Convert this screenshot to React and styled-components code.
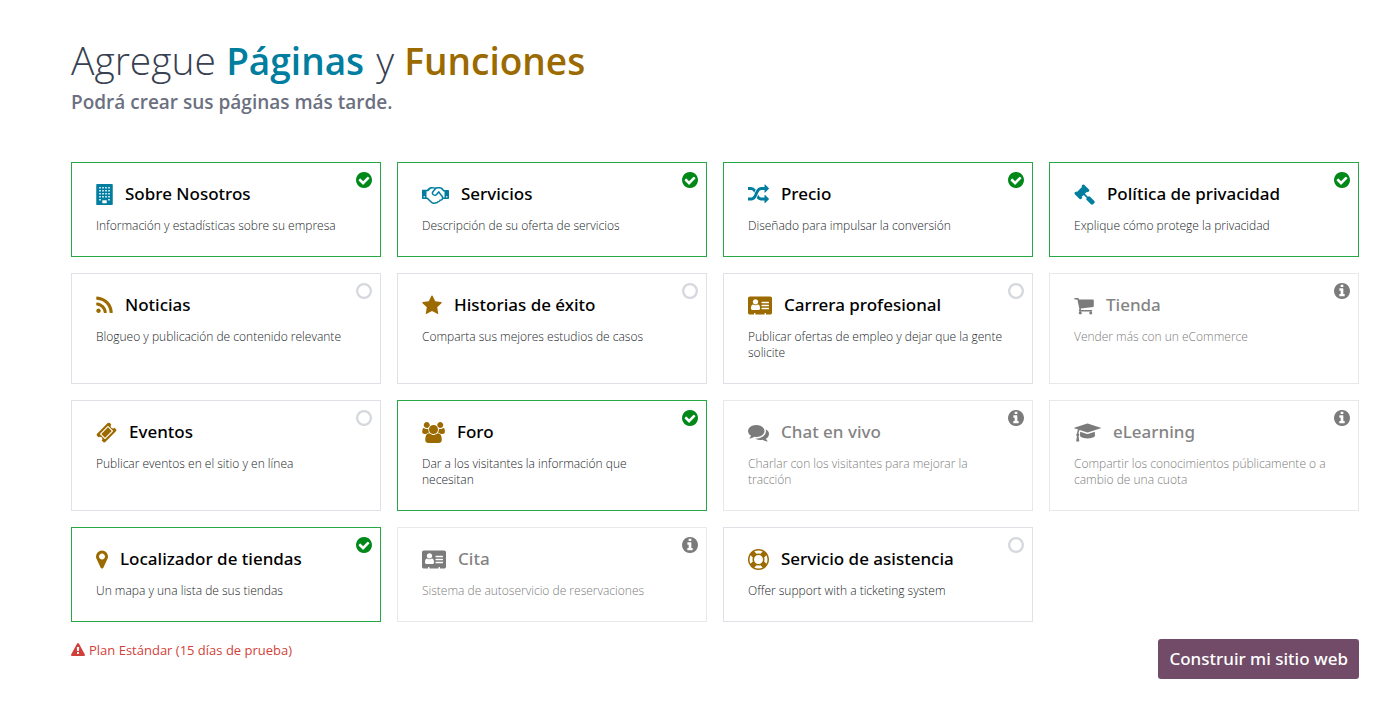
import React, { useState } from "react";
import styled, { createGlobalStyle } from "styled-components";

const GlobalStyle = createGlobalStyle`
  *, *::before, *::after { box-sizing: border-box; }
  body {
    margin: 0;
    background: #fff;
    color: #374151;
    font-family: "Open Sans", "Noto Sans", sans-serif;
    font-size: 13px;
  }
  h1, h2, h3, p { margin: 0; }
`;

const MEDIUM_FONT = `"Noto Sans", "Open Sans", sans-serif`;

const Page = styled.main`
  padding: 35px 30px 36px 71px;
`;

const Title = styled.h1`
  font-size: 39px;
  line-height: 50px;
  font-weight: 300;
`;

const Accent = styled.span`
  margin-right: 2px;
  color: ${(p) => p.$color};
  font-size: 37px;
  line-height: 1;
  font-weight: 600;
`;

const Subtitle = styled.h2`
  margin-bottom: 44px;
  padding-top: 1px;
  color: #6c7080;
  font-size: 19px;
  line-height: 32px;
  font-weight: 600;
`;

const Grid = styled.div`
  display: grid;
  grid-template-columns: repeat(4, 1fr);
  gap: 16px;
`;

const Card = styled.label`
  position: relative;
  display: block;
  padding: 19px 28px 22px 24px;
  border: 1px solid ${(p) => (p.$on ? "#28a745" : "#dee2e6")};
  opacity: ${(p) => (p.$locked ? 0.75 : 1)};
  cursor: ${(p) => (p.$locked ? "default" : "pointer")};
`;

const CardHead = styled.div`
  display: flex;
  align-items: center;
  gap: 12px;
  height: 24px;
  margin-bottom: 12px;
`;

const CardIcon = styled.svg`
  flex: none;
  height: 21px;
  fill: ${(p) => p.$color};
`;

const CardTitle = styled.h3`
  color: ${(p) => (p.$locked ? "#5a5a5a" : "#000")};
  font-family: ${MEDIUM_FONT};
  font-size: 17px;
  line-height: 24px;
  font-weight: 500;
  white-space: nowrap;
`;

const CardText = styled.p`
  color: ${(p) => (p.$locked ? "#4f4f4f" : "#212529")};
  font-size: 12px;
  line-height: 16px;
  font-weight: 300;
`;

const Status = styled.span`
  position: absolute;
  top: 9px;
  right: 8px;
  width: 16px;
  height: 16px;
`;

const StatusIcon = styled.svg`
  display: block;
  width: 16px;
  height: 16px;
  fill: ${(p) => p.$color};
  pointer-events: none;
`;

const Tick = styled.input`
  position: absolute;
  inset: 0;
  width: 16px;
  height: 16px;
  margin: 0;
  appearance: none;
  border-radius: 50%;
  cursor: inherit;
`;

const Footer = styled.footer`
  display: flex;
  justify-content: space-between;
  align-items: flex-start;
  margin-top: 17px;
`;

const Warning = styled.p`
  display: flex;
  align-items: center;
  gap: 4px;
  color: #d23f3a;
  font-size: 13px;
  line-height: 22px;
`;

const WarningIcon = styled.svg`
  width: 14px;
  height: 14px;
  fill: currentColor;
`;

const BuildButton = styled.button`
  height: 40px;
  padding: 0 11px;
  border: 0;
  border-radius: 3px;
  background: #714b67;
  color: #fff;
  font-family: ${MEDIUM_FONT};
  font-size: 17px;
  line-height: 24px;
  font-weight: 500;
  cursor: pointer;
`;

const disc =
  "M1664 896q0 209-103 385.5t-279.5 279.5-385.5 103-385.5-103-279.5-279.5-103-385.5 103-385.5 279.5-279.5 385.5-103 385.5 103 279.5 279.5 103 385.5z";

const STATUS_PATHS = {
  on: `M1412 734q0-28-18-46l-91-90q-19-19-45-19t-45 19l-408 407-226-226q-19-19-45-19t-45 19l-91 90q-18 18-18 46 0 27 18 45l362 362q19 19 45 19 27 0 46-19l543-543q18-18 18-45z${disc}`,
  off: `M896 352q-148 0-273 73t-198 198-73 273 73 273 198 198 273 73 273-73 198-198 73-273-73-273-198-198-273-73z${disc}`,
  locked: `M1152 1376v-160q0-14-9-23t-23-9h-96v-512q0-14-9-23t-23-9h-320q-14 0-23 9t-9 23v160q0 14 9 23t23 9h96v320h-96q-14 0-23 9t-9 23v160q0 14 9 23t23 9h448q14 0 23-9t9-23zm-128-896v-160q0-14-9-23t-23-9h-192q-14 0-23 9t-9 23v160q0 14 9 23t23 9h192q14 0 23-9t9-23z${disc}`,
};

const STATUS_COLORS = { on: "#008818", off: "#d5d8dd", locked: "#4f4f4f" };

const windows = [288, 544, 800, 1056, 1312]
  .flatMap((y) => [256, 512, 768, 1024].map((x) => [x, y]))
  .filter(([x, y]) => !(y === 1312 && x > 256 && x < 1024))
  .map(([x, y]) => `M${x} ${y - 32}h128v128h-128z`)
  .join("");

const ICONS = {
  building: {
    w: 17,
    box: "0 0 1408 1792",
    d: `M1344 0q26 0 45 19t19 45v1664q0 26-19 45t-45 19h-1280q-26 0-45-19t-19-45v-1664q0-26 19-45t45-19zM512 1408q0-32 32-32h320q32 0 32 32v192q0 32-32 32h-320q-32 0-32-32z${windows}`,
  },
  handshake: {
    w: 27,
    box: "0 0 2304 1792",
    d: "M192 1152q40 0 56-32t0-64-56-32-56 32 0 64 56 32zm1473-58q-10-13-38.5-50t-41.5-54-38-49-42.5-53-40.5-47-45-49l-125 140q-83 94-208.5 92t-205.5-98q-57-69-56.5-158t58.5-157l177-206q-22-11-51-16.5t-47.5-6-56.5.5-49 1q-92 0-158 66l-158 158h-155v544q5 0 21-.5t22 0 19.5 2 20.5 4.5 17.5 8.5 18.5 13.5l297 292q115 111 227 111 78 0 125-47 57 20 112.5-8t72.5-85q74 6 127-44 20-18 36-45.5t14-50.5q10 10 43 10 43 0 77-21t49.5-53 12-71.5-30.5-73.5zm159 58h96v-512h-93l-157-180q-66-76-169-76h-167q-89 0-146 67l-209 243q-28 33-28 75t27 75q43 51 110 52t111-49l193-218q25-23 53.5-21.5t47 27 8.5 56.5q16 19 56 63t60 68q29 36 82.5 105.5t64.5 84.5q52 66 60 140zm288 0q40 0 56-32t0-64-56-32-56 32 0 64 56 32zm192-576v640q0 26-19 45t-45 19h-434q-27 65-82 106.5t-125 51.5q-33 48-80.5 81.5t-102.5 45.5q-42 53-104.5 81.5t-128.5 24.5q-60 34-126 39.5t-127.5-14-117-53.5-103.5-81l-287-282h-358q-26 0-45-19t-19-45v-672q0-26 19-45t45-19H421C540 390 620 256 785 256H904Q1040 256 1100 300Q1180 256 1334 256H1500Q1620 256 1720 330Q1770 370 1886 512H2240Q2266 512 2285 531T2304 576z",
  },
  random: {
    w: 21,
    box: "0 0 1792 1792",
    d: "M666 481q-60 92-137 273-22-45-37-72.5t-40.5-63.5-51-56.5-63-35-81.5-14.5h-224q-14 0-23-9t-9-23v-192q0-14 9-23t23-9h224q250 0 410 225zm1126 799q0 14-9 23l-320 320q-9 9-23 9-13 0-22.5-9.5t-9.5-22.5v-192q-32 0-85 .5t-81 1-73-1-71-5-64-10.5-63-18.5-58-28.5-59-40-55-53.5-56-69.5q59-93 136-273 22 45 37 72.5t40.5 63.5 51 56.5 63 35 81.5 14.5h256v-192q0-14 9-23t23-9q12 0 24 10l319 319q9 9 9 23zm0-896q0 14-9 23l-320 320q-9 9-23 9-13 0-22.5-9.5t-9.5-22.5v-192h-256q-48 0-87 15t-69 45-51 61.5-45 77.5q-32 62-78 171-29 66-49.5 111t-54 105-64 100-74 83-90 68.5-106.5 42-128 16.5h-224q-14 0-23-9t-9-23v-192q0-14 9-23t23-9h224q48 0 87-15t69-45 51-61.5 45-77.5q32-62 78-171 29-66 49.5-111t54-105 64-100 74-83 90-68.5 106.5-42 128-16.5h256v-192q0-14 9-23t23-9q12 0 24 10l319 319q9 9 9 23z",
  },
  gavel: {
    w: 21,
    box: "0 0 1792 1792",
    d: "M1771 1536q0 53-37 90l-107 108q-39 37-91 37-53 0-90-37l-363-364q-38-36-38-90 0-53 43-96l-256-256-126 126q-14 14-34 14t-34-14q2 2 12.5 12t12.5 13 10 11.5 10 13.5 6 13.5 5.5 16.5 1.5 18q0 38-28 68-3 3-16.5 18t-19 20.5-18.5 16.5-22 15.5-22 9-26 4.5q-40 0-68-28l-408-408q-28-28-28-68 0-13 4.5-26t9-22 15.5-22 16.5-18.5 20.5-19 18-16.5q30-28 68-28 10 0 18 1.5t16.5 5.5 13.5 6 13.5 10 11.5 10 13 12.5 12 12.5q-14-14-14-34t14-34l348-348q14-14 34-14t34 14q-2-2-12.5-12t-12.5-13-10-11.5-10-13.5-6-13.5-5.5-16.5-1.5-18q0-38 28-68 3-3 16.5-18t19-20.5 18.5-16.5 22-15.5 22-9 26-4.5q40 0 68 28l408 408q28 28 28 68 0 13-4.5 26t-9 22-15.5 22-16.5 18.5-20.5 19-18 16.5q-30 28-68 28-10 0-18-1.5t-16.5-5.5-13.5-6-13.5-10-11.5-10-13-12.5-12-12.5q14 14 14 34t-14 34l-126 126 256 256q43-43 96-43 52 0 91 37l363 363q37 39 37 91z",
  },
  rss: {
    w: 17,
    box: "192 0 1408 1792",
    d: "M576 1344q0 80-56 136t-136 56-136-56-56-136 56-136 136-56 136 56 56 136zm512 123q2 28-17 48-18 21-47 21h-135q-25 0-43-16.5t-20-41.5q-22-229-184.5-391.5t-391.5-184.5q-25-2-41.5-20t-16.5-43v-135q0-29 21-47 17-17 43-17h5q160 13 306 80.5t259 181.5q114 113 181.5 259t80.5 306zm512 2q2 27-18 47-18 20-46 20h-143q-26 0-44.5-17.5t-19.5-42.5q-12-215-101-408.5t-231.5-336-336-231.5-408.5-102q-25-1-42.5-19.5t-17.5-43.5v-143q0-28 20-46 18-18 44-18h3q262 13 501.5 120t425.5 294q187 186 294 425.5t120 501.5z",
  },
  star: {
    w: 20,
    box: "64 0 1664 1792",
    d: "M1728 647q0 22-26 48l-363 354 86 500q1 7 1 20 0 21-10.5 35.5t-30.5 14.5q-19 0-40-12l-449-236-449 236q-22 12-40 12-21 0-31.5-14.5t-10.5-35.5q0-6 2-20l86-500-364-354q-25-27-25-48 0-37 56-46l502-73 225-455q19-41 49-41t49 41l225 455 502 73q56 9 56 46z",
  },
  card: {
    w: 24,
    box: "0 0 2048 1792",
    d: "M1024 1131q0-64-9-117.5t-29.5-103-60.5-78-97-28.5q-6 4-30 18t-37.5 21.5-35.5 17.5-43 14.5-42 4.5-42-4.5-43-14.5-35.5-17.5-37.5-21.5-30-18q-57 0-97 28.5t-60.5 78-29.5 103-9 117.5 37 106.5 91 42.5h512q54 0 91-42.5t37-106.5zM868 594q0-94-66.5-160.5t-161.5-66.5-161.5 66.5-66.5 160.5 66.5 160.5 161.5 66.5 161.5-66.5 66.5-160.5zM1152 1184q0 32 32 32h576q32 0 32-32v-64q0-32-32-32h-576q-32 0-32 32zM1152 928q0 32 32 32h576q32 0 32-32v-64q0-32-32-32h-576q-32 0-32 32zM1152 672q0 32 32 32h576q32 0 32-32v-64q0-32-32-32h-576q-32 0-32 32zM2048 288v1216q0 66-47 113t-113 47h-352v-96q0-32-32-32h-64q-32 0-32 32v96h-768v-96q0-32-32-32h-64q-32 0-32 32v96h-352q-66 0-113-47t-47-113v-1216q0-66 47-113t113-47h1728q66 0 113 47t47 113z",
  },
  cart: {
    w: 20,
    box: "64 0 1664 1792",
    d: "M704 1536q0 52-38 90t-90 38-90-38-38-90 38-90 90-38 90 38 38 90zm896 0q0 52-38 90t-90 38-90-38-38-90 38-90 90-38 90 38 38 90zm128-1088v512q0 24-16.5 42.5t-40.5 21.5l-1044 122q13 60 13 70 0 16-24 64h920q26 0 45 19t19 45-19 45-45 19h-1024q-26 0-45-19t-19-45q0-11 8-31.5t16-36 21.5-40 15.5-29.5l-177-823h-204q-26 0-45-19t-19-45 19-45 45-19h256q16 0 28.5 6.5t19.5 15.5 13 24.5 8 26 5.5 29.5 4.5 26h1201q26 0 45 19t19 45z",
  },
  ticket: {
    w: 21,
    box: "0 0 1792 1792",
    d: "M1024 452l316 316-572 572-316-316zm-211 979l618-618q19-19 19-45t-19-45l-362-362q-18-18-45-18t-45 18l-618 618q-19 19-19 45t19 45l362 362q18 18 45 18t45-18zm889-637l-907 908q-37 37-90.5 37t-90.5-37l-126-126q56-56 56-136t-56-136-136-56-136 56l-125-126q-37-37-37-90.5t37-90.5l907-906q37-37 90.5-37t90.5 37l125 125q-56 56-56 136t56 136 136 56 136-56l126 125q37 37 37 90.5t-37 90.5z",
  },
  users: {
    w: 23,
    box: "0 0 1920 1792",
    d: "M593 896q-162 5-265 128h-134q-82 0-138-40.5t-56-118.5q0-353 124-353 6 0 43.5 21t97.5 42.5 119 21.5q67 0 133-23-5 37-5 66 0 159 93 256zm1071 637q0 120-73 189.5t-194 69.5h-874q-121 0-194-69.5t-73-189.5q0-53 3.5-103.5t14-109 26.5-108.5 43-97.5 62-81 85.5-53.5 111.5-20q10 0 43 21.5t73 48 107 48 135 21.5 135-21.5 107-48 73-48 43-21.5q61 0 111.5 20t85.5 53.5 62 81 43 97.5 26.5 108.5 14 109 3.5 103.5zm-1024-1277q0 106-75 181t-181 75-181-75-75-181 75-181 181-75 181 75 75 181zm704 384q0 159-112.5 271.5t-271.5 112.5-271.5-112.5-112.5-271.5 112.5-271.5 271.5-112.5 271.5 112.5 112.5 271.5zm576 225q0 78-56 118.5t-138 40.5h-134q-103-123-265-128 93-97 93-256 0-29-5-66 66 23 133 23 59 0 119-21.5t97.5-42.5 43.5-21q124 0 124 353zm-128-609q0 106-75 181t-181 75-181-75-75-181 75-181 181-75 181 75 75 181z",
  },
  comments: {
    w: 21,
    box: "0 0 1792 1792",
    d: "M1408 768q0 139-94 257t-256.5 186.5-353.5 68.5q-86 0-176-16-124 88-278 128-36 9-86 16h-3q-11 0-20.5-8t-11.5-21q-1-3-1-6.5t.5-6.5 2-6l2.5-5 3.5-5.5 4-5 4.5-5 4-4.5q5-6 23-25t26-29.5 22.5-29 25-38.5 20.5-44q-124-72-195-177t-71-224q0-139 94-257t256.5-186.5 353.5-68.5 353.5 68.5 256.5 186.5 94 257zm384 256q0 120-71 224.5t-195 176.5q10 24 20.5 44t25 38.5 22.5 29 26 29.5 23 25q1 1 4 4.5t4.5 5 4 5 3.5 5.5l2.5 5 2 6 .5 6.5-1 6.5q-3 14-13 22t-22 7q-50-7-86-16-154-40-278-128-90 16-176 16-271 0-472-132 58 4 88 4 161 0 309-45t264-129q125-92 192-212t67-254q0-77-23-152 129 71 204 178t75 230z",
  },
  graduation: {
    w: 27,
    box: "0 0 2304 1792",
    d: "M1774 836l18 316q4 69-82 128t-235 93.5-323 34.5-323-34.5-235-93.5-82-128l18-316 574 181q22 7 48 7t48-7zm530-324q0 23-22 31l-1120 352q-4 1-10 1t-10-1l-652-206q-43 34-71 111.5t-34 178.5q63 36 63 109 0 69-58 107l58 433q2 14-8 25-9 11-24 11h-192q-15 0-24-11-10-11-8-25l58-433q-58-38-58-107 0-73 65-111 11-207 98-330l-333-104q-22-8-22-31t22-31l1120-352q4-1 10-1t10 1l1120 352q22 8 22 31z",
  },
  marker: {
    w: 12,
    box: "384 0 1024 1792",
    d: "M1152 640q0-106-75-181t-181-75-181 75-75 181 75 181 181 75 181-75 75-181zm256 0q0 109-33 179l-364 774q-16 33-47.5 52t-67.5 19-67.5-19-46.5-52l-365-774q-33-70-33-179 0-212 150-362t362-150 362 150 150 362z",
  },
  lifering: {
    w: 21,
    box: "0 0 1792 1792",
    d: "M896 0q182 0 348 71t286 191 191 286 71 348-71 348-191 286-286 191-348 71-348-71-286-191-191-286-71-348 71-348 191-286 286-191 348-71zm0 128q-190 0-361 90l194 194q82-28 167-28t167 28l194-194q-171-90-361-90zm-678 1129l194-194q-28-82-28-167t28-167l-194-194q-90 171-90 361t90 361zm678 407q190 0 361-90l-194-194q-82 28-167 28t-167-28l-194 194q171 90 361 90zm0-384q159 0 271.5-112.5t112.5-271.5-112.5-271.5-271.5-112.5-271.5 112.5-112.5 271.5 112.5 271.5 271.5 112.5zm484-217l194 194q90-171 90-361t-90-361l-194 194q28 82 28 167t-28 167z",
  },
};

const WARNING_PATH =
  "M1024 1375v-190q0-14-9.5-23.5t-22.5-9.5h-192q-13 0-22.5 9.5t-9.5 23.5v190q0 14 9.5 23.5t22.5 9.5h192q13 0 22.5-9.5t9.5-23.5zm-2-374l18-459q0-12-10-19-13-11-24-11h-220q-11 0-24 11-10 7-10 21l17 457q0 10 10 16.5t24 6.5h185q14 0 23.5-6.5t10.5-16.5zm-14-934l768 1408q35 63-2 126-17 29-46.5 46t-63.5 17h-1536q-34 0-63.5-17t-46.5-46q-37-63-2-126l768-1408q17-31 47-49t65-18 65 18 47 49z";

const BLUE = "#017e9f";
const GOLD = "#9b6a00";
const GREY = "#4f4f4f";

const FEATURES = [
  { icon: "building", color: BLUE, title: "Sobre Nosotros", text: "Información y estadísticas sobre su empresa", state: "on" },
  { icon: "handshake", color: BLUE, title: "Servicios", text: "Descripción de su oferta de servicios", state: "on" },
  { icon: "random", color: BLUE, title: "Precio", text: "Diseñado para impulsar la conversión", state: "on" },
  { icon: "gavel", color: BLUE, title: "Política de privacidad", text: "Explique cómo protege la privacidad", state: "on" },
  { icon: "rss", color: GOLD, title: "Noticias", text: "Blogueo y publicación de contenido relevante", state: "off" },
  { icon: "star", color: GOLD, title: "Historias de éxito", text: "Comparta sus mejores estudios de casos", state: "off" },
  { icon: "card", color: GOLD, title: "Carrera profesional", text: "Publicar ofertas de empleo y dejar que la gente solicite", state: "off" },
  { icon: "cart", color: GREY, title: "Tienda", text: "Vender más con un eCommerce", state: "locked" },
  { icon: "ticket", color: GOLD, title: "Eventos", text: "Publicar eventos en el sitio y en línea", state: "off" },
  { icon: "users", color: GOLD, title: "Foro", text: "Dar a los visitantes la información que necesitan", state: "on" },
  { icon: "comments", color: GREY, title: "Chat en vivo", text: "Charlar con los visitantes para mejorar la tracción", state: "locked" },
  { icon: "graduation", color: GREY, title: "eLearning", text: "Compartir los conocimientos públicamente o a cambio de una cuota", state: "locked" },
  { icon: "marker", color: GOLD, title: "Localizador de tiendas", text: "Un mapa y una lista de sus tiendas", state: "on" },
  { icon: "card", color: GREY, title: "Cita", text: "Sistema de autoservicio de reservaciones", state: "locked" },
  { icon: "lifering", color: GOLD, title: "Servicio de asistencia", text: "Offer support with a ticketing system", state: "off" },
];

function FeatureCard({ feature }) {
  const locked = feature.state === "locked";
  const [on, setOn] = useState(feature.state === "on");
  const state = locked ? "locked" : on ? "on" : "off";
  const icon = ICONS[feature.icon];
  return (
    <Card $on={on} $locked={locked}>
      <CardHead>
        <CardIcon $color={feature.color} width={icon.w} viewBox={icon.box} fillRule="evenodd" aria-hidden="true">
          <path d={icon.d} />
        </CardIcon>
        <CardTitle $locked={locked}>{feature.title}</CardTitle>
      </CardHead>
      <CardText $locked={locked}>{feature.text}</CardText>
      <Status>
        <Tick type="checkbox" checked={on} disabled={locked} onChange={(e) => setOn(e.target.checked)} />
        <StatusIcon $color={STATUS_COLORS[state]} viewBox="128 128 1536 1536" fillRule="evenodd" aria-hidden="true">
          <path d={STATUS_PATHS[state]} />
        </StatusIcon>
      </Status>
    </Card>
  );
}

export default function App() {
  return (
    <>
      <GlobalStyle />
      <Page>
        <Title>
          Agregue <Accent $color={BLUE}>Páginas</Accent> y <Accent $color={GOLD}>Funciones</Accent>
        </Title>
        <Subtitle>Podrá crear sus páginas más tarde.</Subtitle>
        <Grid>
          {FEATURES.map((feature) => (
            <FeatureCard key={feature.title} feature={feature} />
          ))}
        </Grid>
        <Footer>
          <Warning>
            <WarningIcon viewBox="0 0 1792 1792" fillRule="evenodd" aria-hidden="true">
              <path d={WARNING_PATH} />
            </WarningIcon>
            Plan Estándar (15 días de prueba)
          </Warning>
          <BuildButton type="button">Construir mi sitio web</BuildButton>
        </Footer>
      </Page>
    </>
  );
}
